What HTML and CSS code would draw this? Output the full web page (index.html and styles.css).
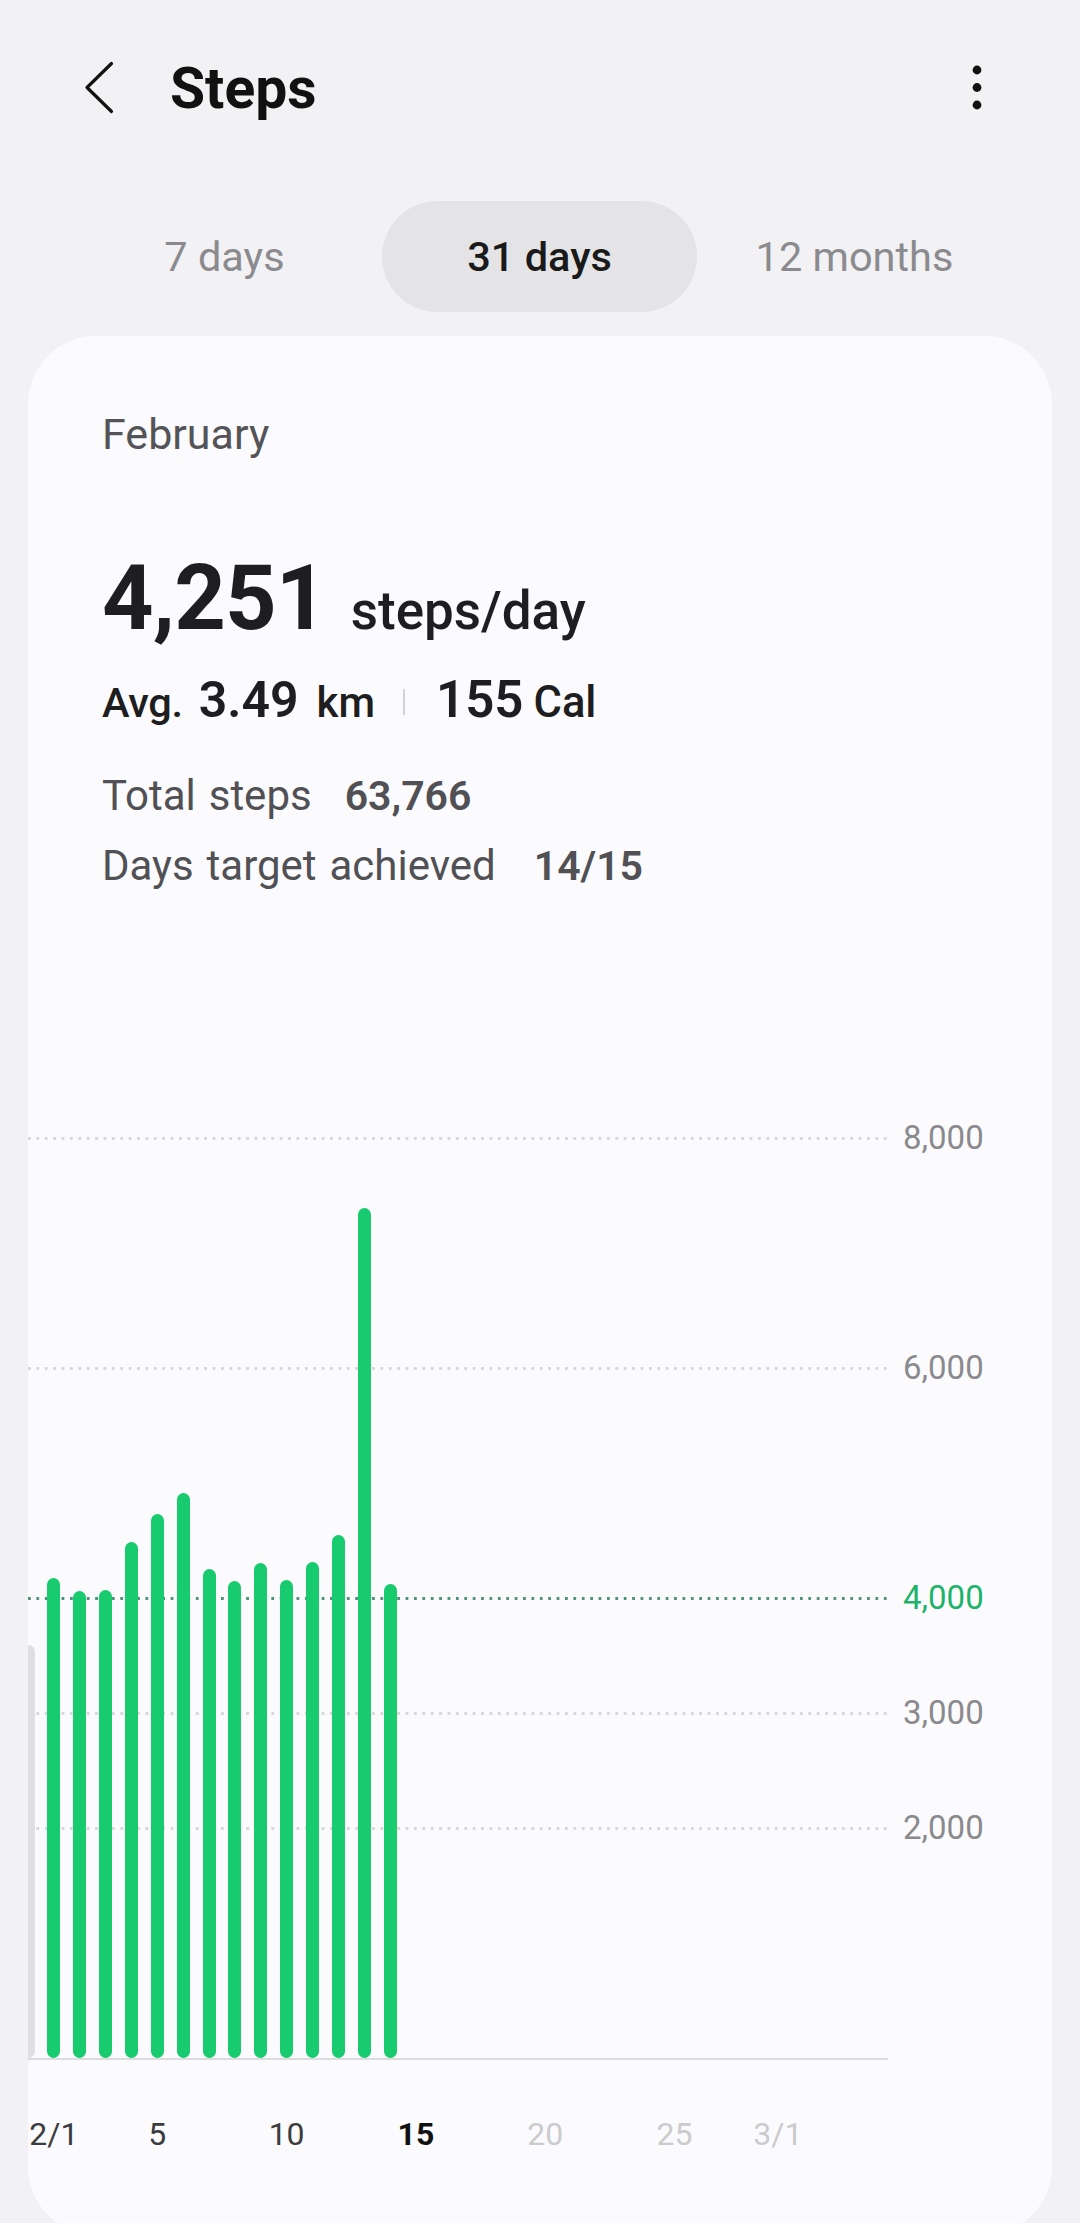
FILE: index.html
```html
<!DOCTYPE html>
<html lang="en">
<head>
<meta charset="utf-8">
<title>Steps</title>
<link rel="stylesheet" href="styles.css">
</head>
<body>
<header class="appbar">
  <svg class="back" width="40" height="60" viewBox="0 0 40 60" aria-hidden="true">
    <path d="M31.5 5.5 L7 29.5 L31.5 53.5" fill="none" stroke="#111" stroke-width="3.2" stroke-linecap="round" stroke-linejoin="round"/>
  </svg>
  <h1 class="title">Steps</h1>
  <svg class="more" width="20" height="60" viewBox="0 0 20 60" aria-hidden="true">
    <circle cx="10" cy="12" r="4.4" fill="#111"/>
    <circle cx="10" cy="29.5" r="4.4" fill="#111"/>
    <circle cx="10" cy="47" r="4.4" fill="#111"/>
  </svg>
</header>

<nav class="tabs">
  <div class="tab">7 days</div>
  <div class="tab active">31 days</div>
  <div class="tab">12 months</div>
</nav>

<main class="card">
  <section class="summary">
    <div class="month">February</div>
    <div class="big-row">
      <span class="big">4,251</span>
      <span class="unit">steps/day</span>
    </div>
    <div class="avg-row">
      <span class="avg-label">Avg.</span>
      <span class="avg-num">3.49</span>
      <span class="avg-unit">km</span>
      <span class="sep"></span>
      <span class="avg-num">155</span>
      <span class="avg-unit cal">Cal</span>
    </div>
    <div class="stat-row">
      <span class="stat-label">Total steps</span>
      <span class="stat-value">63,766</span>
    </div>
    <div class="stat-row">
      <span class="stat-label">Days target achieved</span>
      <span class="stat-value">14/15</span>
    </div>
  </section>

  <section class="chart">
    <div class="plot">
      <div class="grid" style="bottom: 228.5px"><span class="ylab">2,000</span></div>
      <div class="grid" style="bottom: 343.5px"><span class="ylab">3,000</span></div>
      <div class="grid goal" style="bottom: 458.5px"><span class="ylab">4,000</span></div>
      <div class="grid" style="bottom: 688.5px"><span class="ylab">6,000</span></div>
      <div class="grid" style="bottom: 918.5px"><span class="ylab">8,000</span></div>

      <div class="bar prev" style="height: 413px"></div>
      <div class="bar" style="height: 480px"></div>
      <div class="bar" style="height: 467px"></div>
      <div class="bar" style="height: 468px"></div>
      <div class="bar" style="height: 516px"></div>
      <div class="bar" style="height: 544px"></div>
      <div class="bar" style="height: 565px"></div>
      <div class="bar" style="height: 489px"></div>
      <div class="bar" style="height: 477px"></div>
      <div class="bar" style="height: 495px"></div>
      <div class="bar" style="height: 478px"></div>
      <div class="bar" style="height: 496px"></div>
      <div class="bar" style="height: 523px"></div>
      <div class="bar" style="height: 850px"></div>
      <div class="bar" style="height: 474px"></div>
    </div>
    <div class="xaxis">
      <div class="xl x1 past"><span>2/1</span></div>
      <div class="xl x5 past"><span>5</span></div>
      <div class="xl x10 past"><span>10</span></div>
      <div class="xl x15 today"><span>15</span></div>
      <div class="xl x20 future"><span>20</span></div>
      <div class="xl x25 future"><span>25</span></div>
      <div class="xl x29 future"><span>3/1</span></div>
    </div>
  </section>
</main>
</body>
</html>
```

FILE: styles.css
```css
* { box-sizing: border-box; }

html, body {
  margin: 0;
  padding: 0;
}

body {
  width: 1080px;
  height: 2223px;
  overflow: hidden;
  background: #f2f2f4;
  font-family: Roboto, "Noto Sans", "Liberation Sans", sans-serif;
  color: #1c1c1e;
}

/* ---------- App bar ---------- */
.appbar {
  height: 176px;
  display: flex;
  align-items: center;
  padding: 0 93px 0 80px;
}

.back { display: block; flex: none; }

.title {
  margin: 0 0 0 50px;
  font-size: 57px;
  font-weight: 700;
  line-height: 1;
  color: #111;
}

.more { display: block; margin-left: auto; flex: none; }

/* ---------- Tabs ---------- */
.tabs {
  display: grid;
  grid-template-columns: repeat(3, 315px);
  margin: 25px 0 0 67px;
}

.tab {
  height: 111px;
  border-radius: 56px;
  display: flex;
  align-items: center;
  justify-content: center;
  font-size: 41.5px;
  color: #8b8b8f;
}

.tab.active {
  background: #e4e4e6;
  color: #1a1a1a;
  font-weight: 500;
}

/* ---------- Card ---------- */
.card {
  margin: 24px 28px 0;
  height: 1899px;
  background: #fbfbfd;
  border-radius: 68px;
  overflow: hidden;
}

.summary {
  padding: 73px 74px 0;
}

.month {
  font-size: 43px;
  line-height: 50px;
  color: #545458;
}

.big-row {
  display: flex;
  align-items: baseline;
  margin-top: 90px;
  line-height: 100px;
}

.big {
  font-size: 90px;
  font-weight: 700;
  color: #1e1e20;
  letter-spacing: -0.8px;
}

.unit {
  margin-left: 24px;
  font-size: 53px;
  font-weight: 500;
  color: #1e1e20;
}

.avg-row {
  display: flex;
  align-items: baseline;
  margin-top: 9px;
  line-height: 60px;
  color: #1e1e20;
}

.avg-label {
  font-size: 41.5px;
  font-weight: 500;
  letter-spacing: -0.3px;
}

.avg-num {
  margin-left: 16px;
  font-size: 50px;
  font-weight: 600;
}

.avg-row .sep + .avg-num { margin-left: 0; font-size: 51px; }

.avg-unit {
  margin-left: 18px;
  font-size: 42px;
  font-weight: 500;
}

.avg-unit.cal { margin-left: 10px; font-size: 43.5px; }

.sep {
  align-self: center;
  width: 2px;
  height: 26px;
  margin: 0 31px 0 28px;
  background: #d4d4d6;
}

.stat-row {
  display: flex;
  align-items: baseline;
  line-height: 70px;
  color: #505055;
  font-size: 42px;
}

.avg-row + .stat-row { margin-top: 28px; }

.stat-label {
  font-weight: 400;
  word-spacing: 2.5px;
}

.stat-value {
  margin-left: 33px;
  font-size: 41px;
  font-weight: 600;
}

.stat-row + .stat-row .stat-value { margin-left: 38px; }

/* ---------- Chart ---------- */
.chart {
  margin-top: 237px;
}

.plot {
  position: relative;
  width: 860px;
  height: 922px;
  border-bottom: 2px solid #dcdcde;
  display: flex;
  align-items: flex-end;
  gap: 12.86px;
}

.grid {
  position: absolute;
  left: 0;
  width: 100%;
  height: 3px;
  background: linear-gradient(to right, #d8d8da 0 2.6px, transparent 2.6px) 0 0 / 8.4px 3px repeat-x;
}

.grid.goal {
  background: linear-gradient(to right, #4f9478 0 2.8px, transparent 2.8px) 0 0 / 8.4px 3px repeat-x;
}

.ylab {
  position: absolute;
  left: 875px;
  top: 50%;
  transform: translateY(-50%);
  font-size: 33px;
  line-height: 40px;
  color: #8a8a8e;
  white-space: nowrap;
}

.grid.goal .ylab { color: #1db36a; }

.bar {
  position: relative;
  flex: none;
  width: 13px;
  border-radius: 6.5px;
  background: #17cb6e;
}

.bar.prev {
  margin-left: -6.5px;
  background: #dfdfe1;
}

.xaxis {
  display: grid;
  grid-template-columns: repeat(31, 25.86px);
  margin: 54px 0 0 -12.93px;
}

.xl {
  display: flex;
  justify-content: center;
  font-size: 32px;
  line-height: 40px;
  white-space: nowrap;
}

.x1 { grid-column: 2; }
.x5 { grid-column: 6; }
.x10 { grid-column: 11; }
.x15 { grid-column: 16; }
.x20 { grid-column: 21; }
.x25 { grid-column: 26; }
.x29 { grid-column: 30; }

.xl.past { color: #3c3c40; }
.xl.today { color: #111; font-weight: 700; }
.xl.future { color: #cbcbcd; }
```
